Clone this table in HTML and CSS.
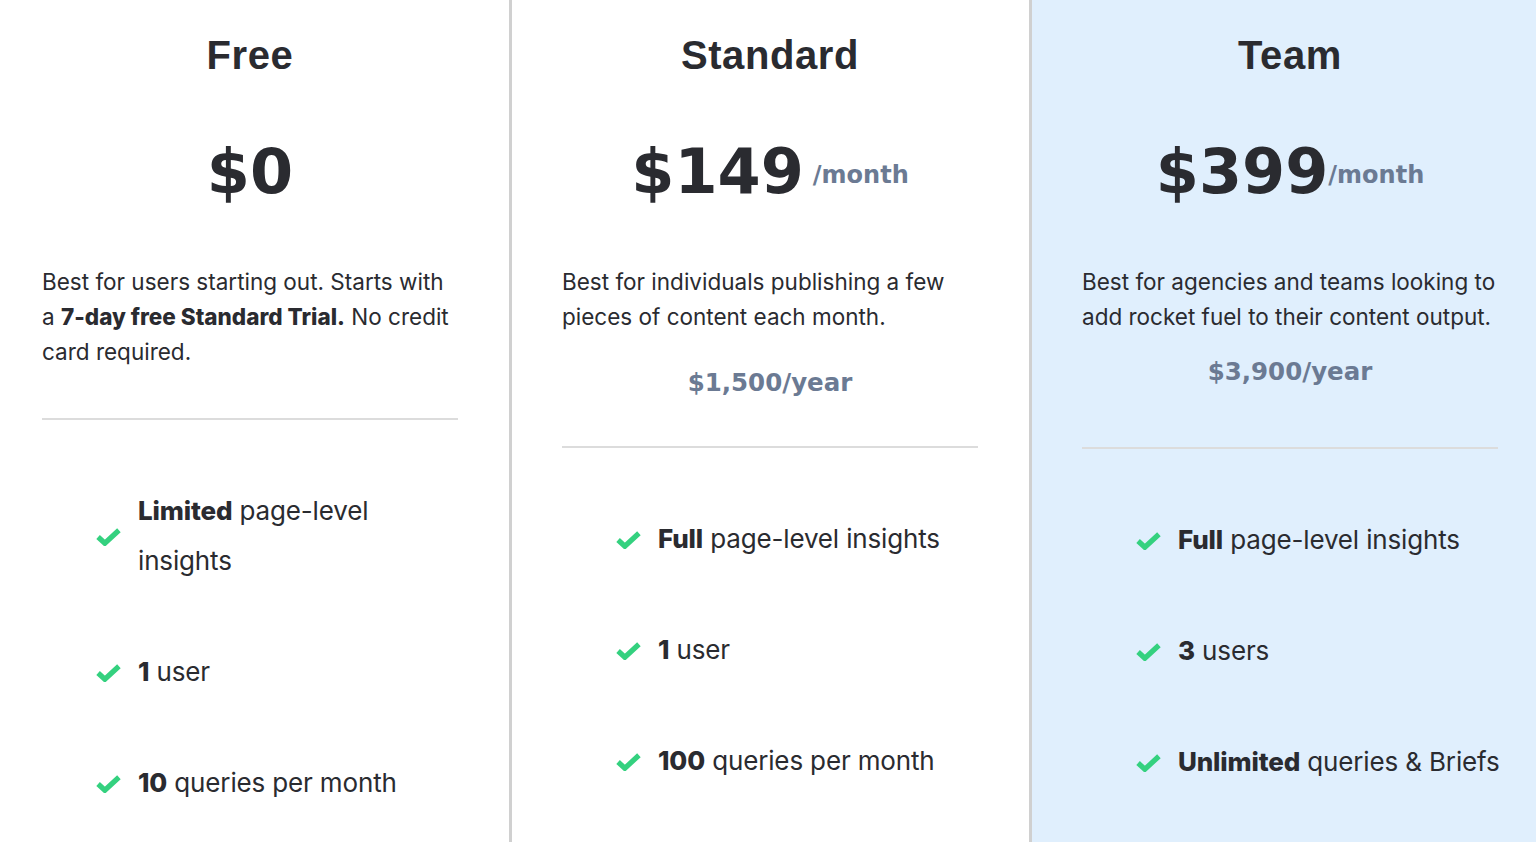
FILE: index.html
```html
<!DOCTYPE html>
<html lang="en">
<head>
<meta charset="utf-8">
<title>Pricing</title>
<link rel="stylesheet" href="styles.css">
</head>
<body>
<div class="plans">
  <section class="plan plan--free">
    <h2 class="plan-name">Free</h2>
    <div class="price"><span class="amount">$0</span></div>
    <p class="desc">Best for users starting out. Starts with a <strong>7-day free Standard Trial.</strong> No credit card required.</p>
    <hr class="rule">
    <ul class="features">
      <li><svg class="check" viewBox="0 0 24 18"><path d="M2 9.5 L8.5 15.5 L22 3"/></svg><span><strong>Limited</strong> page-level insights</span></li>
      <li><svg class="check" viewBox="0 0 24 18"><path d="M2 9.5 L8.5 15.5 L22 3"/></svg><span><strong>1</strong> user</span></li>
      <li><svg class="check" viewBox="0 0 24 18"><path d="M2 9.5 L8.5 15.5 L22 3"/></svg><span><strong>10</strong> queries per month</span></li>
    </ul>
  </section>
  <section class="plan plan--standard">
    <h2 class="plan-name">Standard</h2>
    <div class="price"><span class="amount">$149</span><span class="per per--spaced">/month</span></div>
    <p class="desc">Best for individuals publishing a few pieces of content each month.</p>
    <p class="yearly">$1,500/year</p>
    <hr class="rule">
    <ul class="features">
      <li><svg class="check" viewBox="0 0 24 18"><path d="M2 9.5 L8.5 15.5 L22 3"/></svg><span><strong>Full</strong> page-level insights</span></li>
      <li><svg class="check" viewBox="0 0 24 18"><path d="M2 9.5 L8.5 15.5 L22 3"/></svg><span><strong>1</strong> user</span></li>
      <li><svg class="check" viewBox="0 0 24 18"><path d="M2 9.5 L8.5 15.5 L22 3"/></svg><span><strong>100</strong> queries per month</span></li>
    </ul>
  </section>
  <section class="plan plan--team">
    <h2 class="plan-name">Team</h2>
    <div class="price"><span class="amount">$399</span><span class="per">/month</span></div>
    <p class="desc">Best for agencies and teams looking to add rocket fuel to their content output.</p>
    <p class="yearly yearly--team">$3,900/year</p>
    <hr class="rule">
    <ul class="features features--wide">
      <li><svg class="check" viewBox="0 0 24 18"><path d="M2 9.5 L8.5 15.5 L22 3"/></svg><span><strong>Full</strong> page-level insights</span></li>
      <li><svg class="check" viewBox="0 0 24 18"><path d="M2 9.5 L8.5 15.5 L22 3"/></svg><span><strong>3</strong> users</span></li>
      <li><svg class="check" viewBox="0 0 24 18"><path d="M2 9.5 L8.5 15.5 L22 3"/></svg><span><strong>Unlimited</strong> queries &amp; Briefs</span></li>
    </ul>
  </section>
</div>
</body>
</html>
```
FILE: styles.css
```css
* { box-sizing: border-box; }
html, body { margin: 0; padding: 0; }
body {
  background: #ffffff;
  color: #2a2b30;
  font-family: "Inter", "Noto Sans", sans-serif;
  overflow: hidden;
}
.plans {
  display: grid;
  grid-template-columns: 509px 520px 1fr;
  height: 842px;
}
.plan {
  padding: 31px 51px 0 50px;
}
.plan--free { padding-left: 42px; }
.plan--standard { border-left: 3px solid #d0d0d0; }
.plan--team { border-left: 3px solid #d0d0d0; background: #e0effd; padding-right: 10px; }
.plan-name {
  margin: 0;
  width: 416px;
  text-align: center;
  font-family: "Liberation Sans", Arial, sans-serif;
  font-weight: 700;
  font-size: 40px;
  line-height: 48px;
  letter-spacing: 0.6px;
}
.price {
  width: 416px;
  margin-top: 53px;
  height: 80px;
  display: flex;
  justify-content: center;
  align-items: center;
  font-family: "DejaVu Sans", sans-serif;
  font-weight: 700;
}
.amount { font-size: 62px; line-height: 80px; }
.per { font-size: 24px; color: #6b7a93; line-height: 30px; margin-top: 6px; }
.per--spaced { margin-left: 9px; }
.desc {
  margin: 52px 0 0;
  width: 416px;
  font-size: 22.5px;
  line-height: 35px;
  letter-spacing: 0;
}
.desc strong { font-weight: 800; }
.yearly {
  margin: 31px 0 0;
  width: 416px;
  text-align: center;
  font-family: "DejaVu Sans", sans-serif;
  font-weight: 700;
  font-size: 24.5px;
  line-height: 35px;
  color: #6b7a93;
}
.yearly--team { margin-top: 20px; }
.rule {
  width: 416px;
  margin: 49px 0 0;
  border: 0;
  border-top: 2px solid #dcdcdc;
  height: 0;
}
.plan--standard .rule { margin-top: 46px; }
.plan--team .rule { margin-top: 58px; }
.features {
  list-style: none;
  margin: 66px 0 0;
  padding: 0 0 0 54px;
  width: 416px;
}
.features--wide { width: auto; }
.features li {
  display: flex;
  align-items: center;
  gap: 17px;
  font-size: 26px;
  line-height: 50px;
  letter-spacing: -0.15px;
  margin-bottom: 61px;
}
.features strong { font-weight: 800; }
.check {
  flex: none;
  width: 25px;
  height: 19px;
  fill: none;
  stroke: #34d17f;
  stroke-width: 5;
  stroke-linecap: butt;
  stroke-linejoin: miter;
}
```
